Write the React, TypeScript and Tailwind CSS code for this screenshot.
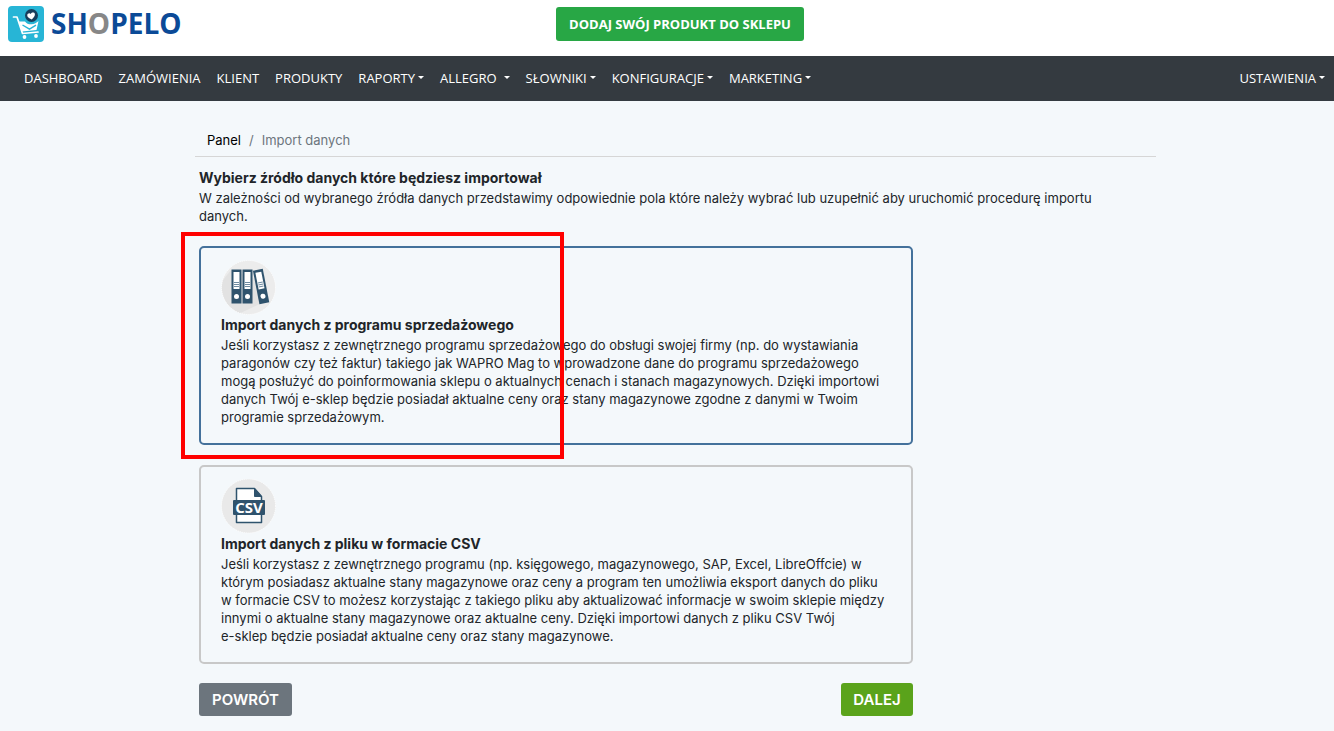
import React from 'react';

interface NavItem {
  label: string;
  dropdown?: boolean;
  wide?: boolean;
}

interface ImportSource {
  id: string;
  title: string;
  lines: string[];
  icon: React.ReactNode;
}

const navItems: NavItem[] = [
  { label: 'DASHBOARD' },
  { label: 'ZAMÓWIENIA' },
  { label: 'KLIENT' },
  { label: 'PRODUKTY' },
  { label: 'RAPORTY', dropdown: true },
  { label: 'ALLEGRO', dropdown: true, wide: true },
  { label: 'SŁOWNIKI', dropdown: true },
  { label: 'KONFIGURACJE', dropdown: true },
  { label: 'MARKETING', dropdown: true },
];

const Caret: React.FC<{ wide?: boolean }> = ({ wide }) => (
  <svg viewBox="0 0 6 3" className={wide ? 'ml-[7px] h-[3px] w-1.5' : 'ml-[3px] h-[3px] w-1.5'} aria-hidden="true">
    <path d="M0 0h6L3 3z" fill="currentColor" />
  </svg>
);

const NavEntry: React.FC<{ item: NavItem }> = ({ item }) =>
  item.dropdown ? (
    <button type="button" className="flex items-center text-white" aria-haspopup="menu">
      {item.label}
      <Caret wide={item.wide} />
    </button>
  ) : (
    <a href="#" className="text-white">
      {item.label}
    </a>
  );

const LogoMark = () => (
  <svg viewBox="0 0 36 36" className="size-9" aria-hidden="true">
    <rect width="36" height="36" rx="4" fill="#27b5d6" />
    <path d="M5.500 11h3.500l5.500 16.500L30 26" fill="none" stroke="#fff" strokeWidth="1.700" strokeLinecap="round" strokeLinejoin="round" />
    <path d="M11 15.500h6c1.500 2.200 4 3 6.500 2.800 3-.2 5-1.300 7-3.300L28.500 24l-14.500 1.500z" fill="#fff" />
    <path d="M14.500 19l7 4.200 6.500-4" fill="none" stroke="#27b5d6" strokeWidth="1.400" />
    <circle cx="16.500" cy="31" r="1.900" fill="#fff" />
    <circle cx="28" cy="30" r="1.900" fill="#fff" />
    <circle cx="23.500" cy="9.500" r="6.500" fill="#173e5c" />
    <path d="M23 13.500c-2.500-2-4-3.300-3.500-5 .5-1.800 2.700-2 3.700-.6 1.200-1.400 3.600-1.200 4 .6.300 1.800-1.700 3.200-4.200 5z" fill="#fff" transform="rotate(-12 23 10)" />
  </svg>
);

const BindersIcon = () => (
  <svg viewBox="0 0 56 55" className="h-[55px] w-14" aria-hidden="true">
    <circle cx="27.500" cy="27.500" r="27" fill="#ececec" />
    <path d="M10 10L2 20a27 27 0 0 0 17 33.200L41 43 37 20z" fill="#e2e2e2" />
    <circle cx="27.500" cy="27.500" r="27" fill="none" stroke="#fff" strokeDasharray="1 1" />
    <g>
      <path d="M10.500 9.500h10v34h-10z" fill="#2f536d" />
      <path d="M12.500 12h6v17h-6z" fill="#fff" />
      <path d="M13 22.500h5M13 24.500h5M13 26.500h5" stroke="#6f8ba0" strokeWidth="1" />
      <circle cx="15.500" cy="36.500" r="2.500" fill="#fff" />
    </g>
    <g>
      <path d="M21.500 9.500h10v34h-10z" fill="#2f536d" />
      <path d="M23.500 12h6v17h-6z" fill="#fff" />
      <path d="M24 22.500h5M24 24.500h5M24 26.500h5" stroke="#6f8ba0" strokeWidth="1" />
      <circle cx="26.500" cy="36.500" r="2.500" fill="#fff" />
    </g>
    <g transform="rotate(-11 40 26)">
      <path d="M35 9.500h10v34H35z" fill="#2f536d" />
      <path d="M37 12h6v17h-6z" fill="#fff" />
      <path d="M37.500 22.500h5M37.500 24.500h5M37.500 26.500h5" stroke="#6f8ba0" strokeWidth="1" />
      <circle cx="40" cy="36.500" r="2.500" fill="#fff" />
    </g>
  </svg>
);

const CsvIcon = () => (
  <svg viewBox="0 0 56 55" className="h-[55px] w-14" aria-hidden="true">
    <circle cx="27.500" cy="27" r="27" fill="#e9e9e9" />
    <circle cx="27.500" cy="27" r="27" fill="none" stroke="#fff" strokeDasharray="1 1" />
    <path d="M15.500 9.500h18l7 8v26h-25z" fill="#fff" stroke="#2f536d" strokeWidth="1.500" strokeLinejoin="round" />
    <path d="M33.500 9.500l7 8h-7z" fill="#2f536d" stroke="#2f536d" strokeLinejoin="round" />
    <rect x="12" y="21" width="32" height="15" rx="1" fill="#2f536d" />
    <text x="28" y="34" textAnchor="middle" fontSize="15" fontWeight="700" fill="#fff" className="font-['Open_Sans',sans-serif]">
      CSV
    </text>
  </svg>
);

const sources: ImportSource[] = [
  {
    id: 'program',
    title: 'Import danych z programu sprzedażowego',
    icon: <BindersIcon />,
    lines: [
      'Jeśli korzystasz z zewnętrznego programu sprzedażowego do obsługi swojej firmy (np. do wystawiania',
      'paragonów czy też faktur) takiego jak WAPRO Mag to wprowadzone dane do programu sprzedażowego',
      'mogą posłużyć do poinformowania sklepu o aktualnych cenach i stanach magazynowych. Dzięki importowi',
      'danych Twój e-sklep będzie posiadał aktualne ceny oraz stany magazynowe zgodne z danymi w Twoim',
      'programie sprzedażowym.',
    ],
  },
  {
    id: 'csv',
    title: 'Import danych z pliku w formacie CSV',
    icon: <CsvIcon />,
    lines: [
      'Jeśli korzystasz z zewnętrznego programu (np. księgowego, magazynowego, SAP, Excel, LibreOffcie) w',
      'którym posiadasz aktualne stany magazynowe oraz ceny a program ten umożliwia eksport danych do pliku',
      'w formacie CSV to możesz korzystając z takiego pliku aby aktualizować informacje w swoim sklepie między',
      'innymi o aktualne stany magazynowe oraz aktualne ceny. Dzięki importowi danych z pliku CSV Twój',
      'e-sklep będzie posiadał aktualne ceny oraz stany magazynowe.',
    ],
  },
];

const SourceCard: React.FC<{ source: ImportSource; selected: boolean; onSelect: () => void }> = ({
  source,
  selected,
  onSelect,
}) => (
  <label
    className={`relative block cursor-pointer rounded-[5px] border-2 pt-3 pr-1 pb-[17px] pl-5 ${
      selected ? 'border-[#44719b]' : 'border-[#c8c8c8]'
    }`}
  >
    <input type="radio" name="source" value={source.id} checked={selected} onChange={onSelect} className="sr-only" />
    {source.icon}
    <span className="block pb-px text-[14px] leading-5 font-bold">{source.title}</span>
    <span className="block">
      {source.lines.map((line) => (
        <span key={line} className="block">
          {line}
        </span>
      ))}
    </span>
  </label>
);

const App: React.FC = () => {
  const [selected, setSelected] = React.useState('program');

  return (
    <div className="min-h-screen bg-[#f4f8fb] font-['Open_Sans',sans-serif] text-[13px] leading-[18px] text-[#212529]">
      <header className="grid h-14 grid-cols-[1fr_auto_1fr] items-start bg-white px-2">
        <a href="#" className="flex gap-[7px] pt-1.5" aria-label="SHOPELO">
          <LogoMark />
          <span className="text-[28px] leading-[34px] font-bold text-[#0b4a97]">
            SH<span className="text-[#878787]">O</span>PELO
          </span>
        </a>
        <button type="button" className="mt-[7px] mr-[-26px] h-[34px] rounded-[3px] bg-[#28a745] px-[13px] text-[13px] font-bold text-white">
          DODAJ SWÓJ PRODUKT DO SKLEPU
        </button>
      </header>

      <nav className="flex h-[45px] items-center justify-between bg-[#343a40] pr-[9px] pb-0.5 pl-6">
        <div className="flex items-center gap-4">
          {navItems.map((item) => (
            <NavEntry key={item.label} item={item} />
          ))}
        </div>
        <NavEntry item={{ label: 'USTAWIENIA', dropdown: true }} />
      </nav>

      <main className="mx-auto max-w-[978px] pt-[30px] pl-[17px] font-['Inter',sans-serif]">
        <ol className="flex gap-2 border-b border-[#d6d6d6] px-3 pb-[7px]">
          <li>
            <a href="#" className="text-black">Panel</a>
          </li>
          <li className="text-[#6c757d]">/</li>
          <li className="text-[#6c757d]">Import danych</li>
        </ol>

        <form className="px-1 pt-[11px]" onSubmit={(e) => e.preventDefault()}>
          <h1 className="pb-px text-[14px] leading-5 font-bold">Wybierz źródło danych które będziesz importował</h1>
          <p>
            W zależności od wybranego źródła danych przedstawimy odpowiednie pola które należy wybrać lub uzupełnić aby uruchomić procedurę importu
            <br />
            danych.
          </p>

          <div className="mt-[21px] max-w-[714px]">
            <div className="flex flex-col gap-5">
              <div className="relative">
                <SourceCard source={sources[0]} selected={selected === 'program'} onSelect={() => setSelected('program')} />
                <div className="pointer-events-none absolute -top-3.5 -left-[18px] h-[227px] w-[383px] border-4 border-[#ff0000]" />
              </div>
              <SourceCard source={sources[1]} selected={selected === 'csv'} onSelect={() => setSelected('csv')} />
            </div>

            <div className="mt-[19px] flex justify-between pb-[15px] text-[15px] font-semibold text-white">
              <button type="button" className="h-[33px] w-[93px] rounded-[3px] bg-[#6c757d]">POWRÓT</button>
              <button type="submit" className="h-[33px] w-[72px] rounded-[3px] bg-[#5aa31b]">DALEJ</button>
            </div>
          </div>
        </form>
      </main>
    </div>
  );
};

export default App;
